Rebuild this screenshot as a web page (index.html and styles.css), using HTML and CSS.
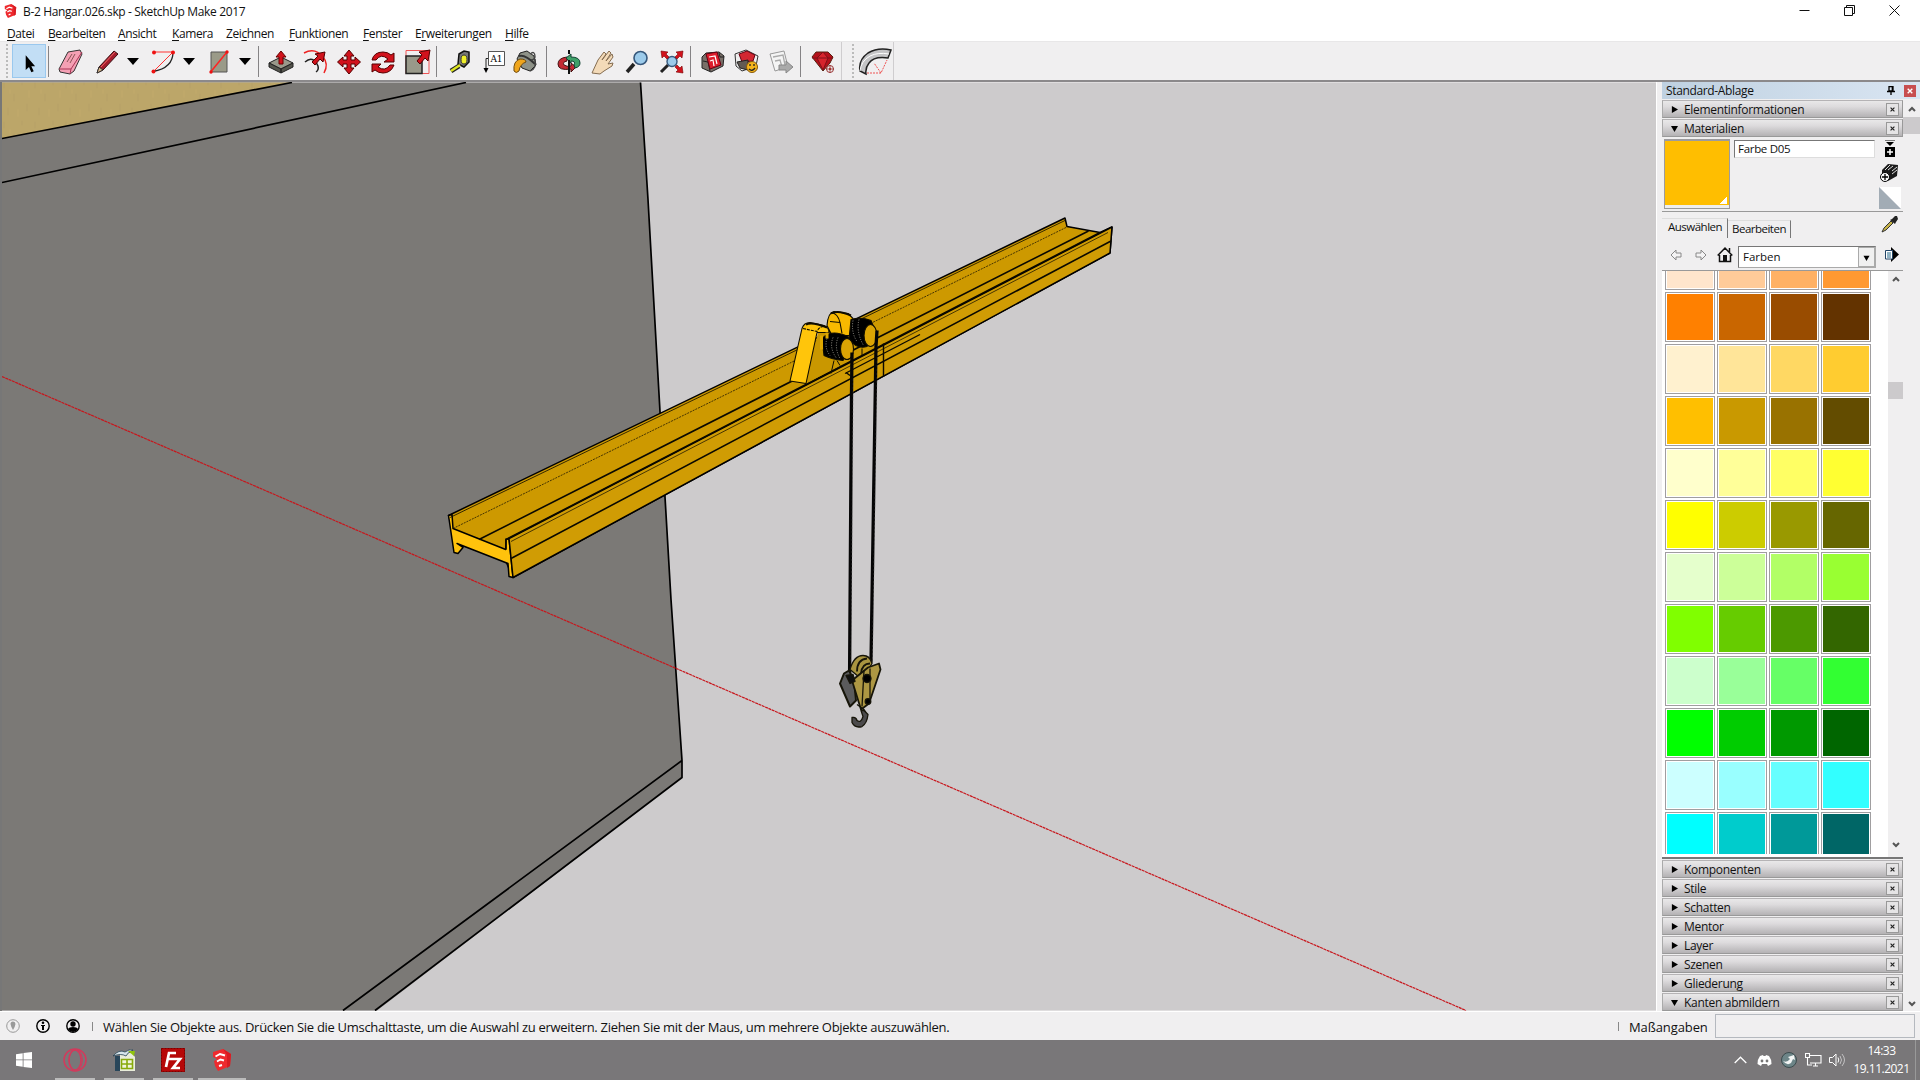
FILE: index.html
```html
<!DOCTYPE html>
<html lang="de">
<head>
<meta charset="utf-8">
<title>B-2 Hangar.026.skp - SketchUp Make 2017</title>
<link rel="stylesheet" href="styles.css">
</head>
<body>
<svg width="0" height="0" class="defs">
  <symbol id="logo" viewBox="0 0 20 22"><path d="M1 3 11 0 19 5 18 17 6 22 3 17 2 12 5 10 1 8Z" fill="#ee2a2e"/><path d="M11 0 19 5 18 17 15 19 15 6Z" fill="#d81c22"/><path d="M3.500 7.500 8 5 13 6.500M5 12.500 8.500 10.500 12 11.500M7 17 10 16" fill="none" stroke="#fff" stroke-width="1.900"/></symbol>
  <symbol id="right" viewBox="0 0 8 8"><path d="M1 0 8 4 1 8Z"/></symbol>
  <symbol id="down" viewBox="0 0 8 8"><path d="M0 1H8L4 8Z"/></symbol>
  <symbol id="chev" viewBox="0 0 8 6"><path d="M1 5 4 2 7 5" fill="none" stroke="#555" stroke-width="2"/></symbol>
  <symbol id="x" viewBox="0 0 6 6"><path d="M.7 .7 5.300 5.300M5.300 .7 .7 5.300" fill="none" stroke="#222" stroke-width="1.400"/></symbol>
</svg>
<div class="app">
  <header class="titlebar">
    <svg class="app-logo"><use href="#logo"/></svg>
    <span class="title">B-2 Hangar.026.skp - SketchUp Make 2017</span>
    <div class="window-buttons">
      <svg viewBox="0 0 11 11"><path d="M0.500 5.500H10.500"/></svg>
      <svg viewBox="0 0 11 11"><path d="M.5 2.500H8.500V10.500H.5ZM2.500 2.500V.5H10.500V8.500H8.500"/></svg>
      <svg viewBox="0 0 11 11"><path d="M.5 .5 10.500 10.500M10.500 .5 .5 10.500"/></svg>
    </div>
  </header>
  <nav class="menu">
    <span class="m1"><u>D</u>atei</span><span class="m2"><u>B</u>earbeiten</span><span class="m3"><u>A</u>nsicht</span><span class="m4"><u>K</u>amera</span><span class="m5">Zei<u>c</u>hnen</span><span class="m6"><u>F</u>unktionen</span><span class="m7"><u>F</u>enster</span><span class="m8">E<u>r</u>weiterungen</span><span class="m9"><u>H</u>ilfe</span>
  </nav>
  <div class="toolbar">
    <i class="grip"></i>
    <svg class="tool active" viewBox="12 44 34 34"><path d="M25.500 55V70.500L29 67.500 31.500 73 34 72 31.500 66.500H35.500Z"/></svg>
    <i class="sep s1"></i>
    <svg class="tool" viewBox="53 44 34 34"><path d="M59 69 68 52 80 50 82 54 74 71 70 74 60 72Z" fill="#f4a0b4" stroke="#333"/><path d="M59 69 71 69 82 52M71 69 70 74" fill="none" stroke="#a35"/><path d="M70 63 75 54M67 62 72 54" stroke="#855" stroke-width="1" fill="none"/></svg>
    <svg class="tool pen" viewBox="90 44 34 34"><path d="M97 73 99 67 114 51 118 54 103 70Z" fill="#a51c2c" stroke="#3a1014"/><path d="M97 73 99 67 103 70Z" fill="#dcb98a" stroke="#333"/><path d="M101 67 115 52" stroke="#e66"/></svg>
    <svg class="drop" viewBox="0 0 12 7"><path d="M0 0H12L6 7Z"/></svg>
    <svg class="tool gap" viewBox="146 44 34 34"><path d="M173 52Q173 68 153 71.500" fill="none" stroke="#222" stroke-width="1.300"/><path d="M154 52H173L154 71" fill="none" stroke="#f33"/><g fill="#e11"><circle cx="154" cy="52.500" r="2"/><circle cx="173" cy="52.500" r="2"/><circle cx="153.500" cy="71.500" r="2"/></g></svg>
    <svg class="drop" viewBox="0 0 12 7"><path d="M0 0H12L6 7Z"/></svg>
    <svg class="tool gap" viewBox="202 44 34 34"><path d="M211 52H227V72H211Z" fill="#9a9a88" stroke="#555"/><path d="M211 71.500 227 52" stroke="#f22" stroke-width="1.500"/><circle cx="227" cy="52" r="1.700" fill="#e11"/><circle cx="211" cy="72" r="1.700" fill="#e11"/></svg>
    <svg class="drop" viewBox="0 0 12 7"><path d="M0 0H12L6 7Z"/></svg>
    <i class="sep s2"></i>
    <svg class="tool" viewBox="264 44 34 34"><path d="M269 63 281 57 293 63 281 69Z" fill="#99988a" stroke="#222"/><path d="M269 63V67L281 73V69ZM293 63V67L281 73V69Z" fill="#55554d" stroke="#222"/><path d="M279 64V57H276L281 51 286 57H283V64Z" fill="#d1121c" stroke="#600"/></svg>
    <svg class="tool" viewBox="298 44 34 34"><path d="M304 53Q315 47 323 57 329 64 324 73" fill="none" stroke="#e22" stroke-width="1.500"/><path d="M305 62Q313 55 318 66 319 70 316 72" fill="none" stroke="#222" stroke-width="1.500"/><path d="M312 62 318 56 315 54 325 52 323 62 320 59 315 65Z" fill="#d1121c" stroke="#500"/></svg>
    <svg class="tool" viewBox="332 44 34 34"><path d="M349 50 354 56H351V60H355V57L360.500 62 355 67V64H351V68H354L349 74 344 68H347V64H343V67L337.500 62 343 57V60H347V56H344Z" fill="#d1121c" stroke="#500"/></svg>
    <svg class="tool" viewBox="366 44 34 34"><path d="M372 60Q374 52 383 52 388 52 391 55L394 53V62H384L388 59Q381 53 376 60Z" fill="#d1121c" stroke="#500"/><path d="M394 65Q391 73 383 73 378 73 375 70L372 72V64H381L378 67Q385 72 390 65Z" fill="#d1121c" stroke="#500"/></svg>
    <svg class="tool" viewBox="400 44 34 34"><path d="M406 50.500H429V73.500H406Z" fill="none" stroke="#e55"/><path d="M406 56H422V73.500H406Z" fill="#99998a" stroke="#222" stroke-width="1.500"/><path d="M417 61 422 55 419 52 430 50 428 61 425 58 420 64Z" fill="#d1121c" stroke="#500"/></svg>
    <i class="sep s3"></i>
    <svg class="tool" viewBox="443 44 34 34"><path d="M459 54 464 51 469 52 469 62 464 67 458 64Z" fill="#777" stroke="#111" stroke-width="1.500"/><ellipse cx="464" cy="59.500" rx="3" ry="4.500" fill="#f0f02a" stroke="#333"/><path d="M459 66 451 71" stroke="#222" stroke-width="5"/><path d="M460 65 451 71" stroke="#dfe620" stroke-width="2.500"/></svg>
    <svg class="tool" viewBox="477 44 34 34"><path d="M488.500 51.500H504.500V65.500H488.500Z" fill="#fff" stroke="#555"/><path d="M488 58.500H486V69" fill="none" stroke="#222"/><path d="M483.500 68H488.500L486 73Z"/><text x="496.500" y="62" class="a1">A1</text></svg>
    <svg class="tool" viewBox="511 44 34 34"><path d="M517 59 520 53 527 51 534 56 536 65 530 71 522 68Z" fill="#8e9288" stroke="#222"/><path d="M519 56Q525 54 535 64" fill="none" stroke="#333" stroke-width="2"/><path d="M530 54Q535 50 535 57 534 60 531 60M535 59Q537 69 530 71" fill="none" stroke="#444" stroke-width="1.400"/><path d="M514 71Q513 61 520 59 526 59 526 62 520 64 519 71 516 74 514 71Z" fill="#efa51c" stroke="#6d4a10"/></svg>
    <i class="sep s4"></i>
    <svg class="tool" viewBox="552 44 34 34"><path d="M558 64Q558 58 567 57V61Q562 62 564 65 567 67 571 66V63L576 67 571 72V69Q558 71 558 64Z" fill="#c32a34" stroke="#411"/><path d="M571 54V57Q580 57 580 63 580 67 575 68L574 65Q576 61 571 61V63L566 58Z" fill="#3fa068" stroke="#143"/><path d="M569 50V54M569 60V74" stroke="#111" stroke-width="2"/></svg>
    <svg class="tool" viewBox="586 44 34 34"><path d="M592 73 598 60 604 52 606 54 602 60 609 51 611 53 606 61 612 54 613 57 608 64 613 63 612 66 604 71 600 74Z" fill="#f3dab8" stroke="#846c50"/></svg>
    <svg class="tool" viewBox="620 44 34 34"><path d="M634 64 627 72" stroke="#222" stroke-width="3.500"/><circle cx="640.500" cy="58" r="6.500" fill="#9ccbeb" stroke="#36587c" stroke-width="1.600"/></svg>
    <svg class="tool" viewBox="654 44 34 34"><path d="M668 65 661 72" stroke="#222" stroke-width="3"/><circle cx="672" cy="61.500" r="5" fill="#9ccbeb" stroke="#36587c" stroke-width="1.400"/><path d="M661 51 668 52 666 54 669 57 667 59 664 56 662 58ZM683 51 676 52 678 54 675 57 677 59 680 56 682 58ZM683 73 676 72 678 70 675 67 677 65 680 68 682 66Z" fill="#d1121c" stroke="#700" stroke-width=".6"/></svg>
    <i class="sep s5"></i>
    <svg class="tool" viewBox="696 44 34 34"><path d="M702 57 706 53 719 52 724 56 723 66 711 72 702 68Z" fill="#796f68" stroke="#222"/><path d="M703 61 708 62 710 71M719 53 720 57 724 57" fill="none" stroke="#222"/><path d="M706 54 717 52 721 65 710 69Z" fill="#dd1d2c" stroke="#601"/><path d="M709 57 715 56 717 64M710 61 713 60 714 66" stroke="#fff" fill="none" stroke-width="1.200"/></svg>
    <svg class="tool" viewBox="730 44 34 34"><path d="M735 54 746 50 758 56 756 66 742 71 736 66Z" fill="#eee" stroke="#333"/><path d="M739 54 747 51 755 55 753 61 742 62Z" fill="#d32732" stroke="#601"/><path d="M737 62 748 60V70L740 68Z" fill="#625a54" stroke="#222"/><circle cx="752" cy="67" r="5.500" fill="#f5b51c" stroke="#85570a"/><path d="M750 64V66M754 64V66M749 69Q752 72 755 68" fill="none" stroke="#222" stroke-width="1.300"/></svg>
    <svg class="tool" viewBox="764 44 34 34"><path d="M770 54 784 51 788 67 775 71Z" fill="#f4f4f4" stroke="#999"/><path d="M773 57 783 55 785 65M775 61 780 60 782 67" fill="none" stroke="#aaa" stroke-width="1.300"/><path d="M779 65H786V61L793 67 786 73V70H779Z" fill="#aaa" stroke="#888"/></svg>
    <i class="sep s6"></i>
    <svg class="tool" viewBox="805 44 34 34"><path d="M812 57 816 52 828 52 833 57 830 63 823 71Z" fill="#b5101a" stroke="#521"/><path d="M812 58H833M817 58 823 70 828 58 823 52Z" fill="#d6242c" stroke="#801018"/><circle cx="830" cy="69" r="3.500" fill="#eee" stroke="#933"/><circle cx="830" cy="69" r="1.200" fill="#b33"/><path d="M830 65V73M826 69H834" stroke="#933" stroke-width=".8"/></svg>
    <div class="second-bar"><i class="grip"></i><svg class="tool" viewBox="858 44 34 34"><path d="M866 74 860 71Q858 60 868 53 878 47 891 50L888 58Q874 56 869 63 865 68 866 74Z" fill="#c4c4c6" stroke="#222" stroke-width="1.500"/><path d="M860 71Q861 61 870 56 878 52 889 54" fill="none" stroke="#fff"/><path d="M867 73H881L887 60M881 73 874 63" fill="none" stroke="#e55" stroke-dasharray="2 1"/></svg></div>
  </div>

  <main class="work">
    <svg class="scene" viewBox="2 83 1654 928" stroke-linejoin="round">
      <defs><pattern id="sand" width="31" height="40" patternUnits="userSpaceOnUse"><rect width="31" height="40" fill="#bca669"/><path d="M4 2V9M14 14V22M22 1V6M27 24V32M8 28V36" stroke="#b6a166"/><path d="M18 30V37M10 10V14M29 11V18" stroke="#c2ab6a"/></pattern></defs>
      <path d="M2 83H1656V1011H2Z" fill="#cdcbcc"/>
      <path d="M2 83H640.500L648 200 660 412 671 600 682 761V778L377 1011H2Z" fill="#7b7976"/>
      <path d="M2 83H292L2 139Z" fill="url(#sand)"/>
      <g fill="none" stroke="#000" stroke-width="1.700"><path d="M2 139 292 83M2 183 466 83M640.500 83 648 200 660 412 671 600 682 761V778L375 1011M682 761 343 1011"/></g>
      <path d="M2 377 1466 1011" stroke="#c8161c" stroke-width="1.200" stroke-dasharray="3 .6"/>

      <g stroke="#000" stroke-width="1.500">
        <path d="M448.500 516 1065 218.500 1067 227 1100 233 1112 227.500 1110 253.500 513 578 505 560 457 544Z" fill="#cd9900"/>
        <path d="M448.500 516 452 515 453 529 505.700 550 506 540 509 539 513 578 509 577 508 564 457 544 463 548 458 554 454 553Z" fill="#ffc20c"/>
        <path d="M509 539 1112 227.500 1110 253.500 513 578Z" fill="#d09c04"/>
      </g>
      <g fill="none" stroke="#0b0900">
        <path d="M453 529 1066 228" stroke-width=".7" stroke-dasharray="2 1"/>
        <path d="M450 518 1065 221" stroke-width=".8"/>
        <path d="M479 540 1088.500 231.500M511 559 1111 241.500" stroke-width="1.600"/>
        <path d="M506 540 1100 233M506 539V550" stroke-width="1.500"/>
        <path d="M511 542 1108 233" stroke-width=".7"/>
        <path d="M845 374 920 335M883.500 344V377M846 373 850 376" stroke-width="1.400"/>
      </g>

      <g stroke="#100d00" stroke-width="1.100">
        <path d="M806 384 818 333 828 331 840 366Z" fill="#c99700" stroke="none"/>
        <path d="M827 326Q828 313 834 312L848 314 853 319 850 336 832 336Z" fill="#f8b900"/>
        <path d="M830 322 840 323 842 334M831 313Q838 314 840 323" fill="none"/>
        <path d="M790 381.500 802 329Q804 323 810 323L824 326Q829 328 829 333L817 333 806 384Z" fill="#ffc50b"/>
        <path d="M803 329 817 332Q819 327 824 327" fill="none" stroke-dasharray="3 1"/>
        <path d="M806 325Q812 322 827 328M831 314Q838 310 851 316" fill="none" stroke-width="2"/>
        <path d="M851 320Q861 317 871 321L875 331 867 347Q857 350 849 340Z"/>
        <ellipse cx="870.500" cy="336" rx="6.500" ry="11" fill="#dba404"/>
        <path d="M822 339Q831 329 848 337L851 346 843 361Q832 360 824 356Z"/>
        <path d="M827 333V339M821.500 336V350" stroke="#e0a800" stroke-width="3"/>
        <ellipse cx="847" cy="349.500" rx="6.500" ry="10.500" fill="#dba404"/>
        <path d="M827 339Q824 348 830 356M833 338Q829 348 836 358M838 338Q834 348 840 359M853 321Q851 333 857 342M859 320Q856 332 863 345" fill="none" stroke="#b5b1a6" stroke-width=".8" stroke-dasharray="1 1.500"/>
        <path d="M831 374 834 361M840 366 837 361M862 349V356" fill="none" stroke-width="1"/>
      </g>
      <g fill="none" stroke="#050505" stroke-width="3.300"><path d="M852 353 851.500 393 849.500 686M877 331 876 347 872 600 871 663"/></g>
      <path d="M853.300 380 851 686M877.500 350 872.500 663" fill="none" stroke="#777" stroke-width=".6" stroke-dasharray="1 3"/>

      <g stroke="#171509" stroke-width="1.300">
        <path d="M850 670Q854 656 863 656 870 656 872 664L862 680Z" fill="#a99540"/>
        <path d="M857 672Q857 660 867 659M861 674Q862 664 870 664" fill="none" stroke-width="1.800"/>
        <path d="M840 684 844 674 849 671 854 681 856 701 850 707Z" fill="#5b5b5c" stroke-width="2"/>
        <path d="M852 681 868 668 879 664 880.500 670 869 704 861 710Z" fill="#ad9743" stroke-width="1.800"/>
        <path d="M864 671 862 707M870 669V703" fill="none"/>
        <circle cx="867" cy="679" r="4"/><circle cx="868" cy="702" r="2.800"/>
        <path d="M846 676 853 675 855 682 850 684ZM857 705 864 710 866 713" fill="#111"/>
        <path d="M864 711 868 715Q867 724 862 727 855 729 852 723L852 718Q856 717 857 721 861 724 863 717L861 711Z" fill="#4b4a4b"/>
      </g>
    </svg>

    <aside class="tray">
      <div class="tray-title"><span>Standard-Ablage</span><svg class="pin" viewBox="0 0 8 9"><path d="M2 .5H6V5H2ZM0 5.500H8M4 5V9M5.300 .5V5" fill="none" stroke="#000" stroke-width="1.300"/></svg><b class="close"><svg viewBox="0 0 6 6"><path d="M.7 .7 5.300 5.300M5.300 .7 .7 5.300"/></svg></b></div>
      <div class="tray-body">
        <div class="panels">
          <div class="bar"><svg><use href="#right"/></svg><span>Elementinformationen</span><b><svg><use href="#x"/></svg></b></div>
          <div class="bar"><svg><use href="#down"/></svg><span>Materialien</span><b><svg><use href="#x"/></svg></b></div>
          <section class="material">
            <div class="preview"><i></i></div>
            <div class="name">Farbe D05</div>
            <div class="mat-icons">
              <svg viewBox="0 0 22 17"><path d="M7 2H15L11 6ZM6 7H16V17H6Z"/><path d="M11 9V15M8 12H14" stroke="#fff" stroke-width="1.500"/><path d="M6 .5H16" stroke="#777"/></svg>
              <svg viewBox="0 0 22 20"><path d="M3 7 9 1 19 2 18 13 9 18 3 15Z" fill="#1b1b1b"/><path d="M6 7 11 2M9 7 14 3M13 8 18 4M13 11 18 7" stroke="#ddd" fill="none"/><circle cx="6" cy="14" r="4.500" fill="#fff" stroke="#000"/><path d="M6 11V17M3 14H9" stroke="#000" stroke-width="1.300"/></svg>
              <svg viewBox="0 0 22 22"><path d="M0 0H22V22Z" fill="#fff"/><path d="M0 0V22H22Z" fill="#a2acb5"/></svg>
            </div>
          </section>
          <div class="tabs"><span class="on">Auswählen</span><span>Bearbeiten</span><svg viewBox="0 0 18 18"><path d="M1 17 3 13 10 6 12 8 5 15Z" fill="#c5b247" stroke="#333"/><path d="M9 5 14 9 15 7 17 4 16 1 14 1 11 4Z" fill="#222"/></svg></div>
          <div class="finder">
            <svg class="f1" viewBox="0 0 13 12"><path d="M1 6 6 1V4H11V8H6V11Z"/></svg><svg class="f2" viewBox="0 0 13 12"><path d="M12 6 7 1V4H2V8H7V11Z"/></svg>
            <svg class="home" viewBox="0 0 16 17"><path d="M.7 9.500 8 2 15.300 9.500M2.500 9V15.500H13.500V9M12.500 2V6" fill="none" stroke="#111" stroke-width="1.500"/><path d="M6 9H10V15H6Z" fill="#111"/></svg>
            <div class="select"><span>Farben</span><b><svg><use href="#down"/></svg></b></div>
            <svg class="details" viewBox="0 0 14 15"><path d="M6 0 14 7.500 6 15Z"/><path d="M.5 3.500H7.500V12H.5Z" fill="#fff" stroke="#246"/><path d="M2 6H6M2 8H6M2 10H6" stroke="#268"/></svg>
          </div>
          <div class="library">
            <div class="swatches">
              <i style="--c:#ffe5cc"></i><i style="--c:#ffcb99"></i><i style="--c:#ffb164"></i><i style="--c:#ff9932"></i>
              <i style="--c:#ff8000"></i><i style="--c:#c96600"></i><i style="--c:#994c00"></i><i style="--c:#633300"></i>
              <i style="--c:#fff1cf"></i><i style="--c:#ffe599"></i><i style="--c:#ffd863"></i><i style="--c:#ffcc30"></i>
              <i style="--c:#ffbf00"></i><i style="--c:#c99900"></i><i style="--c:#997200"></i><i style="--c:#634c00"></i>
              <i style="--c:#ffffcc"></i><i style="--c:#ffff99"></i><i style="--c:#ffff64"></i><i style="--c:#ffff32"></i>
              <i style="--c:#ffff00"></i><i style="--c:#cccc00"></i><i style="--c:#999900"></i><i style="--c:#666600"></i>
              <i style="--c:#e5ffcc"></i><i style="--c:#ccff99"></i><i style="--c:#b2ff66"></i><i style="--c:#99ff32"></i>
              <i style="--c:#80ff00"></i><i style="--c:#66cc00"></i><i style="--c:#4c9900"></i><i style="--c:#336600"></i>
              <i style="--c:#ccffcc"></i><i style="--c:#99ff99"></i><i style="--c:#66ff66"></i><i style="--c:#32ff32"></i>
              <i style="--c:#00ff00"></i><i style="--c:#00cc00"></i><i style="--c:#009900"></i><i style="--c:#006600"></i>
              <i style="--c:#ccffff"></i><i style="--c:#99ffff"></i><i style="--c:#66ffff"></i><i style="--c:#32ffff"></i>
              <i style="--c:#00ffff"></i><i style="--c:#00cccc"></i><i style="--c:#009999"></i><i style="--c:#006666"></i>
            </div>
            <div class="scroll inner"><svg><use href="#chev"/></svg><i></i><svg class="flip"><use href="#chev"/></svg></div>
          </div>
          <div class="bar"><svg><use href="#right"/></svg><span>Komponenten</span><b><svg><use href="#x"/></svg></b></div>
          <div class="bar"><svg><use href="#right"/></svg><span>Stile</span><b><svg><use href="#x"/></svg></b></div>
          <div class="bar"><svg><use href="#right"/></svg><span>Schatten</span><b><svg><use href="#x"/></svg></b></div>
          <div class="bar"><svg><use href="#right"/></svg><span>Mentor</span><b><svg><use href="#x"/></svg></b></div>
          <div class="bar"><svg><use href="#right"/></svg><span>Layer</span><b><svg><use href="#x"/></svg></b></div>
          <div class="bar"><svg><use href="#right"/></svg><span>Szenen</span><b><svg><use href="#x"/></svg></b></div>
          <div class="bar"><svg><use href="#right"/></svg><span>Gliederung</span><b><svg><use href="#x"/></svg></b></div>
          <div class="bar"><svg><use href="#down"/></svg><span>Kanten abmildern</span><b><svg><use href="#x"/></svg></b></div>
        </div>
        <div class="scroll outer"><svg><use href="#chev"/></svg><i></i><svg class="flip"><use href="#chev"/></svg></div>
      </div>
    </aside>
  </main>

  <footer class="status">
    <svg viewBox="0 0 14 14"><circle cx="7" cy="7" r="6.300" fill="none" stroke="#999"/><path d="M4.500 5A2.500 2.500 0 0 1 9.500 5Q9 8 7 11 5 8 4.500 5Z" fill="#999"/></svg>
    <svg viewBox="0 0 14 14"><circle cx="7" cy="7" r="6.200" fill="none" stroke="#000" stroke-width="1.400"/><circle cx="7" cy="3.800" r="1.300"/><path d="M5 6H9V7H8V11H6V7H5Z"/></svg>
    <svg viewBox="0 0 14 14"><circle cx="7" cy="7" r="6.200" fill="none" stroke="#000" stroke-width="1.400"/><circle cx="7" cy="5" r="2.700"/><path d="M2 10Q3 8 7 8T12 10Q10 13 7 13T2 10Z"/></svg>
    <i class="tick"></i>
    <span class="hint">Wählen Sie Objekte aus. Drücken Sie die Umschalttaste, um die Auswahl zu erweitern. Ziehen Sie mit der Maus, um mehrere Objekte auszuwählen.</span>
    <i class="tick end"></i>
    <span class="measure">Maßangaben</span>
    <div class="vcb"></div>
  </footer>

  <div class="taskbar">
    <svg class="start" viewBox="0 0 16 16"><path d="M0 2.200 6.700 1.200V7.500H0ZM7.500 1.100 16 0V7.500H7.500ZM0 8.300H6.700V14.700L0 13.800ZM7.500 8.300H16V16L7.500 14.900Z" fill="#fff"/></svg>
    <div class="task t1"><svg viewBox="0 0 24 24"><circle cx="12" cy="12" r="11" fill="none" stroke="#d23a5c" stroke-width="1.500"/><ellipse cx="12" cy="12" rx="6" ry="10" fill="none" stroke="#d23a5c" stroke-width="1.500"/><path d="M16 2Q23 12 16 22M8 5Q4 12 8 19" fill="none" stroke="#d23a5c"/></svg></div>
    <div class="task t2"><svg viewBox="0 0 24 24"><path d="M3 8H9V23H3Z" fill="#29465a"/><path d="M8 5H20L23 9V23H8Z" fill="#e9edda"/><path d="M1 8Q7 1 13 4 17 1 21 2 15 5 14 8 9 5 1 8Z" fill="#d6e4ea" stroke="#244050" stroke-width=".8"/><path d="M16 3 23 3 22 8Z" fill="#90c40c"/><path d="M9.500 11.500H20.500V20.500H9.500ZM15 12V20M10 16H20" fill="#f1f5dd" stroke="#88aa0b" stroke-width="1.600"/></svg></div>
    <div class="task t3"><svg viewBox="0 0 24 24"><path d="M0 0H24V24H0Z" fill="#b60808"/><path d="M.5 .5H23.500V23.500H.5Z" fill="none" stroke="#7c0000" stroke-dasharray="2 1"/><path d="M5 19 8 5H15M7 11H13M12 11H19L12 20H19" fill="none" stroke="#fff" stroke-width="2.700"/></svg></div>
    <div class="task t4"><svg viewBox="0 0 20 22"><use href="#logo"/></svg></div>
    <div class="systray">
      <svg viewBox="0 0 13 8"><path d="M.7 7 6.500 1.200 12.300 7" fill="none" stroke="#fff" stroke-width="1.300"/></svg>
      <svg class="discord" viewBox="0 0 15 11"><path d="M3 1 6 0 6.500 1H8.500L9 0 12 1Q15 5 14.500 9L11 11 10 9H5L4 11 .5 9Q0 5 3 1Z" fill="#fff"/><circle cx="5" cy="6" r="1.400" fill="#777"/><circle cx="10" cy="6" r="1.400" fill="#777"/></svg>
      <svg class="steam" viewBox="0 0 16 16"><circle cx="8" cy="8" r="7.500" fill="#6d8588" stroke="#3c4b4e"/><path d="M2 9Q6 11 9 7L7 5 13 3 14 8 12 7 10 11Q6 14 2 9Z" fill="#f3f5f5"/></svg>
      <svg class="net" viewBox="0 0 17 14"><path d="M5 2.500H16V10H5M8 13H13M10.500 10V13M.5 .5H4.500V4.500H.5ZM2.500 4.500V12H7" fill="none" stroke="#fff" stroke-width="1.100"/></svg>
      <svg class="sound" viewBox="0 0 16 14"><path d="M.5 4.500H3.500L7 1V13L3.500 9.500H.5ZM9 4.500Q10.500 7 9 9.500" fill="none" stroke="#fff"/><path d="M11 3Q14 7 11 11M13 1Q18 7 13 13" fill="none" stroke="#c2c1c2"/></svg>
      <div class="clock"><span>14:33</span><span>19.11.2021</span></div>
      <i class="peek"></i>
    </div>
  </div>
</div>
</body>
</html>
```
FILE: styles.css
```css
* { box-sizing: border-box; }
body { margin: 0; background: #f0eff0; color: #111; font-family: "Open Sans", "Noto Sans", sans-serif; font-size: 12px; overflow: hidden; }
svg { display: block; flex: none; }
.defs { position: absolute; }
i, b { display: block; flex: none; }
.app { width: 1920px; height: 1080px; display: flex; flex-direction: column; white-space: nowrap; }

.titlebar { height: 22px; background: #fff; display: flex; align-items: center; padding-left: 4px; }
.app-logo { width: 13px; height: 14px; }
.title { margin-left: 6px; letter-spacing: -.36px; }
.window-buttons { margin-left: auto; display: flex; gap: 34px; padding: 0 20px 2px 0; }
.window-buttons svg { width: 11px; height: 11px; fill: none; stroke: #111; }

.menu { height: 19px; background: #fff; display: flex; padding-left: 7px; line-height: 23px; letter-spacing: -.4px; }
.menu u { text-underline-offset: 2px; }
.m1 { width: 41px; } .m2 { width: 70px; } .m3, .m4 { width: 54px; } .m5 { width: 63px; } .m6 { width: 74px; } .m7 { width: 52px; } .m8 { width: 90px; }

.toolbar { height: 41px; display: flex; align-items: center; background: #f0eff0; border-bottom: 2px solid #8b898b; border-top: 1px solid #e8e7e8; }
.grip { width: 2px; height: 34px; margin: 0 4px 0 6px; background: repeating-linear-gradient(#bbb 0 2px, transparent 2px 4px); }
.tool { width: 34px; height: 34px; }
.active { background: #c2def5; border: 1px solid #9ac8ee; }
.pen { margin-left: 3px; }
.gap { margin-left: 4px; }
.drop { width: 12px; height: 7px; margin: 0 3px; }
.sep { width: 1px; height: 31px; background: #858385; }
.s1 { margin: 0 4px 0 2px; } .s2 { margin: 0 5px 0 4px; } .s3 { margin: 0 6px 0 2px; } .s4 { margin: 0 5px 0 1px; } .s5 { margin: 0 5px 0 2px; } .s6 { margin: 0 4px 0 2px; }
.a1 { font: 9px "DejaVu Serif", serif; text-anchor: middle; }
.second-bar { height: 100%; display: flex; align-items: center; width: 53px; margin-left: 2px; border: solid #cfcdcf; border-width: 0 1px; }
.second-bar .grip { margin: 0 4px 0 10px; }

.work { height: 929px; display: flex; }
.scene { width: 1656px; height: 929px; border-left: 2px solid #777; }
.tray { width: 264px; padding-left: 5px; border-left: 1px solid #fff; display: flex; flex-direction: column; }
.tray-title { height: 17px; display: flex; align-items: center; padding-left: 4px; background: linear-gradient(90deg, #bfd1e1, #d9e5f2); font-size: 12px; letter-spacing: -.35px; }
.pin { width: 8px; height: 9px; margin-left: auto; }
.close { width: 12px; height: 12px; background: #c74e50; margin: 0 4px 0 9px; padding: 3px; }
.close svg { width: 6px; height: 6px; stroke: #fff; stroke-width: 1.4; }
.tray-body { flex: 1; display: flex; min-height: 0; }
.panels { width: 241px; height: 912px; }
.bar { height: 18px; margin-top: 1px; display: flex; align-items: center; padding: 0 3px 0 8px; border: 1px solid #aaa8aa; border-color: #b5b3b5 #999 #999 #aaa; background: linear-gradient(#e9e8e9, #dddbdd 35%, #b4b2b4); letter-spacing: -.3px; }
.bar > svg { width: 7px; height: 7px; margin-right: 6px; }
.bar b { margin-left: auto; width: 13px; height: 13px; border: 1px solid #999; background: #e5e4e5; padding: 3px; }
.bar b svg { width: 5px; height: 5px; }

.material { height: 75px; display: flex; border-bottom: 1px solid #999; padding: 2px 2px 0; }
.preview { width: 66px; height: 70px; border: 1px solid #9d9b9d; border-top-width: 2px; background: #ffbe00; border-bottom: 1px solid #999; box-shadow: inset 0 -3px #eee; padding: 56px 2px 0 55px; }
.preview i { width: 7px; height: 7px; background: linear-gradient(135deg, transparent 50%, #fff 50%); }
.name { margin: 1px 0 0 4px; width: 141px; height: 18px; background: #fff; border: 1px solid #ddd; border-top-color: #777; border-left-color: #777; padding-left: 3px; line-height: 16px; font-size: 11.5px; letter-spacing: -.3px; }
.mat-icons { margin-left: 4px; display: flex; flex-direction: column; }
.mat-icons svg { width: 22px; }
.mat-icons svg:nth-child(1) { height: 17px; margin-top: 1px; }
.mat-icons svg:nth-child(2) { height: 20px; margin: 6px 0 4px; }
.mat-icons svg:nth-child(3) { height: 22px; }
.tabs { height: 29px; display: flex; align-items: flex-end; padding-bottom: 3px; font-size: 11.5px; letter-spacing: -.5px; }
.tabs span { height: 18px; width: 63px; padding-left: 4px; line-height: 16px; border: solid #777; border-width: 0 1px 0 0; border-top: 1px solid #ddd; }
.tabs .on { width: 66px; height: 20px; padding-left: 6px; line-height: 16px; }
.tabs svg { width: 18px; height: 18px; margin: 0 4px 5px auto; }
.finder { height: 29px; display: flex; align-items: center; padding: 0 0 2px 8px; }
.finder > svg { width: 13px; height: 12px; fill: #f4f3f4; stroke: #888; }
.finder .f2 { margin-left: 11px; }
.finder .home { width: 16px; height: 17px; margin: 0 5px 0 10px; stroke: none; }
.finder .details { width: 14px; height: 15px; margin-left: 9px; fill: #000; stroke: none; }
.select { width: 138px; height: 22px; margin-top: 5px; display: flex; background: #fff; border: 1px solid #777; border-right-color: #aaa; border-bottom-color: #aaa; padding-left: 4px; line-height: 20px; font-size: 11.5px; }
.select b { width: 17px; margin-left: auto; border: 1px solid #aaa; background: #f0f0f0; padding: 7px 4px; }
.select b svg { width: 7px; height: 6px; }
.library { height: 589px; border-top: 1px solid #999; border-bottom: 2px solid #777; display: flex; background: #fff; }
.swatches { width: 226px; height: 583px; overflow: hidden; display: grid; grid-template-columns: repeat(4, 50px); grid-template-rows: 19px; grid-auto-rows: 50px; gap: 2px; padding-left: 3px; align-content: start; }
.swatches i { background: var(--c); border: 1px solid #a09ea0; box-shadow: inset 0 0 0 1px #fff; }
.swatches i:nth-child(-n+4) { margin-top: -31px; height: 50px; }
.scroll { display: flex; flex-direction: column; align-items: center; background: #f0eff0; }
.scroll svg { width: 8px; height: 6px; }
.scroll .flip { transform: rotate(180deg); margin-top: auto; }
.scroll i { width: 100%; background: #cccacc; }
.inner { width: 15px; padding: 5px 0 9px; }
.inner i { height: 17px; margin-top: 100px; }
.outer { width: 17px; padding: 7px 0 4px; }
.outer i { height: 17px; margin-top: 5px; }

.status { height: 29px; display: flex; align-items: center; border-top: 1px solid #fff; background: #f0eff0; font-size: 13px; }
.status svg { width: 14px; height: 14px; margin-right: 16px; }
.status svg:first-child { margin-left: 6px; }
.tick { width: 1px; height: 9px; background: #888; margin: 0 10px 0 -4px; }
.hint { width: 1000px; letter-spacing: -.3px; padding-top: 1px; }
.end { margin: 0 10px 0 auto; }
.measure { width: 86px; letter-spacing: -.1px; padding-top: 1px; }
.vcb { width: 200px; height: 24px; border: 1px solid #b5b9bf; margin-right: 5px; }

.taskbar { height: 40px; background: #797779; display: flex; align-items: center; color: #fff; }
.start { width: 16px; height: 16px; margin: 0 23px 0 16px; }
.task { width: 40px; height: 40px; margin-right: 9px; border-bottom: 2px solid #bbb; display: flex; align-items: center; justify-content: center; padding-top: 1px; }
.task svg { width: 24px; height: 24px; }
.t3 { margin-right: 5px; }
.t4 { width: 48px; }
.t4 svg { width: 20px; height: 22px; }
.systray { margin-left: auto; display: flex; align-items: center; height: 40px; }
.systray svg:first-child { width: 13px; height: 8px; }
.discord { width: 15px; height: 11px; margin-left: 10px; }
.steam { width: 16px; height: 16px; margin-left: 9px; }
.net { width: 17px; height: 14px; margin-left: 8px; }
.sound { width: 16px; height: 14px; margin-left: 7px; }
.clock { width: 70px; padding-left: 3px; display: flex; flex-direction: column; align-items: center; line-height: 18px; letter-spacing: -.5px; }
.peek { width: 1px; height: 40px; background: #999; margin: 0 4px 0 0; }
```
